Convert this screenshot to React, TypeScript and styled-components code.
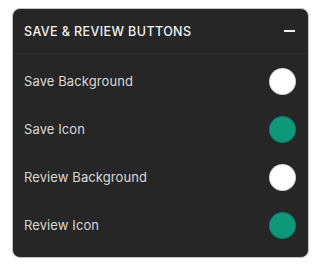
import React from 'react';
import styled, { createGlobalStyle } from 'styled-components';

const GlobalStyle = createGlobalStyle`
  html, body {
    margin: 0;
    padding: 0;
    background: #ffffff;
    font-family: Inter, "Noto Sans", sans-serif;
  }
`;

interface ColorRow {
  label: string;
  color: string;
}

const rows: ColorRow[] = [
  { label: 'Save Background', color: '#ffffff' },
  { label: 'Save Icon', color: '#0f977a' },
  { label: 'Review Background', color: '#ffffff' },
  { label: 'Review Icon', color: '#0f977a' },
];

export default function App() {
  return (
    <>
      <GlobalStyle />
      <Page>
        <Panel>
          <Header>
            <Title>Save &amp; Review Buttons</Title>
            <Collapse />
          </Header>
          <List>
            {rows.map((row) => (
              <Row key={row.label}>
                <Label>{row.label}</Label>
                <Swatch color={row.color} />
              </Row>
            ))}
          </List>
        </Panel>
      </Page>
    </>
  );
}

const Page = styled.div({
  padding: '8px 13px 0 12px',
});

const Panel = styled.div({
  width: '297px',
  height: '250px',
  boxSizing: 'border-box',
  background: '#262626',
  border: '1px solid #c4c4c4',
  borderRadius: '8px',
  overflow: 'hidden',
});

const Header = styled.div({
  height: '44px',
  display: 'flex',
  alignItems: 'center',
  justifyContent: 'space-between',
  padding: '0 13px 0 11px',
  borderBottom: '1px solid #2e2e2e',
});

const Title = styled.div({
  color: '#f2f2f2',
  fontSize: '12.5px',
  fontWeight: 500,
  letterSpacing: '0.4px',
  textTransform: 'uppercase',
});

const Collapse = styled.div({
  width: '11px',
  height: '1.5px',
  background: '#f2f2f2',
});

const List = styled.div({
  display: 'flex',
  flexDirection: 'column',
  paddingTop: '3px',
});

const Row = styled.div({
  height: '48px',
  display: 'flex',
  alignItems: 'center',
  justifyContent: 'space-between',
  padding: '0 12px 0 11px',
});

const Label = styled.div({
  color: '#d9d9d9',
  fontSize: '13px',
  letterSpacing: '0.1px',
});

const Swatch = styled.div<{ color: string }>((p) => ({
  width: '27px',
  height: '27px',
  borderRadius: '50%',
  background: p.color,
  boxSizing: 'border-box',
  border: '1px solid rgba(0,0,0,0.15)',
}));
